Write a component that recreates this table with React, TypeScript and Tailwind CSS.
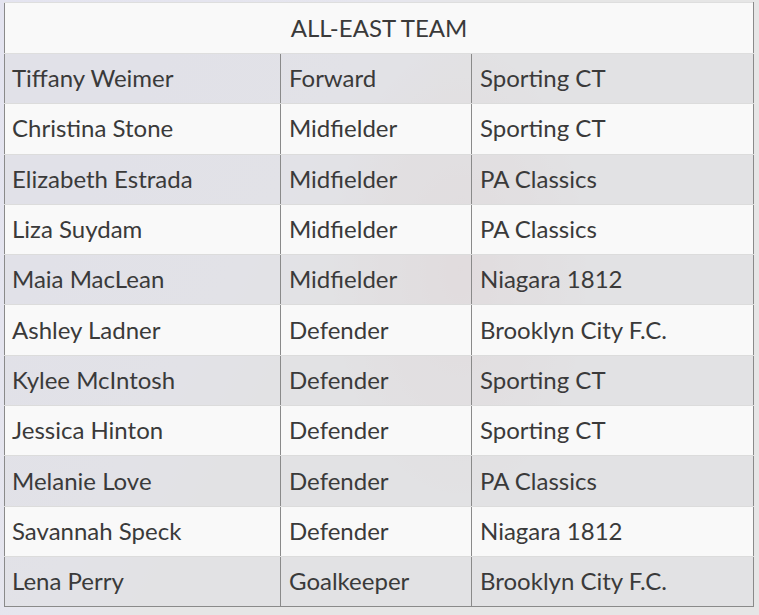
const players: [string, string, string][] = [
  ["Tiffany Weimer", "Forward", "Sporting CT"],
  ["Christina Stone", "Midfielder", "Sporting CT"],
  ["Elizabeth Estrada", "Midfielder", "PA Classics"],
  ["Liza Suydam", "Midfielder", "PA Classics"],
  ["Maia MacLean", "Midfielder", "Niagara 1812"],
  ["Ashley Ladner", "Defender", "Brooklyn City F.C."],
  ["Kylee McIntosh", "Defender", "Sporting CT"],
  ["Jessica Hinton", "Defender", "Sporting CT"],
  ["Melanie Love", "Defender", "PA Classics"],
  ["Savannah Speck", "Defender", "Niagara 1812"],
  ["Lena Perry", "Goalkeeper", "Brooklyn City F.C."],
];

export default function App() {
  return (
    <div
      className="relative h-[615px] w-[759px] overflow-hidden bg-[#e6e6ea] pt-[2px] pl-[4px] text-[#3a3a3a]"
      style={{ fontFamily: "Lato, 'Open Sans', sans-serif" }}
    >
      {/* faint photo behind the table */}
      <div className="pointer-events-none absolute inset-0 bg-[linear-gradient(120deg,#e4e4f0_0%,#e6e6ee_35%,#e6e6e6_45%)]" />
      <div className="pointer-events-none absolute left-[330px] top-[40px] h-[460px] w-[260px] rounded-full bg-[radial-gradient(ellipse_at_center,rgba(220,120,120,0.12),rgba(0,0,0,0)_70%)]" />

      <table className="relative w-[749px] table-fixed border-collapse text-[24px] leading-none">
        <colgroup>
          <col className="w-[276px]" />
          <col className="w-[191px]" />
          <col className="w-[282px]" />
        </colgroup>
        <thead>
          <tr className="h-[51px] bg-[#f9f9f9]">
            <th
              colSpan={3}
              className="border-x border-t border-b border-x-[#8a8a8a] border-t-[#dedede] border-b-[#dedede] pb-[1px] text-center font-normal"
            >
              ALL-EAST TEAM
            </th>
          </tr>
        </thead>
        <tbody>
          {players.map(([name, position, club], i) => {
            const last = i === players.length - 1;
            const bottom = last ? "border-b-[#8a8a8a]" : "border-b-[#dcdcdc]";
            return (
              <tr
                key={name}
                className={`h-[50.3px] ${i % 2 === 0 ? "bg-[rgba(222,222,226,0.55)]" : "bg-[#f9f9f9]"}`}
              >
                <td className={`border-b border-l border-l-[#8a8a8a] pb-[1px] pl-[7px] ${bottom}`}>{name}</td>
                <td className={`border-b border-l border-l-[#8a8a8a] pb-[1px] pl-[8px] ${bottom}`}>{position}</td>
                <td className={`border-b border-x border-x-[#8a8a8a] pb-[1px] pl-[8px] ${bottom}`}>{club}</td>
              </tr>
            );
          })}
        </tbody>
      </table>
    </div>
  );
}
